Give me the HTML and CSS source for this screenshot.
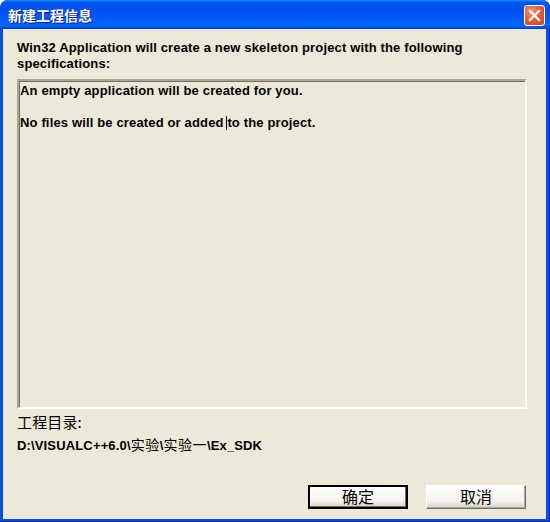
FILE: index.html
```html
<!DOCTYPE html>
<html>
<head>
<meta charset="utf-8">
<link rel="stylesheet" href="styles.css">
</head>
<body>
<div class="window">
  <div class="titlebar">
    <span class="title">新建工程信息</span>
    <div class="close">
      <svg width="21" height="21" viewBox="0 0 21 21"><path d="M6 6 L15 15 M15 6 L6 15" stroke="#fff" stroke-width="2.2" stroke-linecap="square"/></svg>
    </div>
  </div>
  <div class="client">
    <p class="intro">Win32 Application will create a new skeleton project with the following specifications:</p>
    <div class="box">
      <p class="line">An empty application will be created for you.</p>
      <p class="line">&nbsp;</p>
      <p class="line">No files will be created or added <span class="caret"></span>to the project.</p>
    </div>
    <p class="label">工程目录:</p>
    <p class="path">D:\VISUALC++6.0\<span class="cjk">实验</span>\<span class="cjk">实验一</span>\Ex_SDK</p>
    <div class="buttons">
      <button class="btn default">确定</button>
      <button class="btn">取消</button>
    </div>
  </div>
</div>
</body>
</html>
```
FILE: styles.css
```css
* { box-sizing: border-box; }
html, body { margin: 0; padding: 0; background: #fff; }
.window {
  width: 550px; height: 522px;
  background: #0a4ee4;
  border-radius: 8px 8px 0 0;
  display: flex; flex-direction: column;
  overflow: hidden;
  box-shadow: inset 0 -1px 0 #001ea0, inset -1px 0 0 #001ea0;
}
.titlebar {
  height: 29px; flex: none;
  display: flex; align-items: center; justify-content: space-between;
  padding: 0 5px 0 8px;
  background: linear-gradient(180deg, #0997ff 0%, #0053ee 8%, #0050ee 40%, #0066ff 88%, #0053e8 94%, #003dd7 100%);
  border-radius: 8px 8px 0 0;
}
.title {
  color: #fff; font: bold 14px "Noto Sans CJK SC", sans-serif;
  text-shadow: 1px 1px 0 #0a1883;
  margin-top: 1px;
}
.close {
  width: 21px; height: 21px; margin-top: 1px;
  border: 1px solid #fff; border-radius: 3px;
  background: radial-gradient(circle at 35% 30%, #f09a7c 0%, #e0603a 45%, #c94520 100%);
  display: flex; align-items: center; justify-content: center;
}
.close svg { display: block; margin: -1px; }
.client {
  flex: 1;
  margin: 0 4px 3px 3px;
  background: #ece9d8;
  padding: 11px 19px 0 14px;
  font: bold 13px "Liberation Sans", Arial, sans-serif;
  letter-spacing: 0.15px;
  color: #000;
  display: flex; flex-direction: column;
}
p { margin: 0; }
.intro { line-height: 16px; }
.box {
  margin-top: 7px;
  height: 330px;
  border-style: solid; border-width: 2px;
  border-color: #aca899 #fff #fff #aca899;
  box-shadow: inset 1px 1px 0 #716f64;
  padding: 2px 1px;
  background: #ece9d8;
}
.line { line-height: 16px; white-space: nowrap; }
.caret { display: inline-block; width: 1px; height: 14px; background: #000; vertical-align: -3px; margin-left: -1px; }
.label {
  margin-top: 5px;
  font: 15px "Noto Sans CJK SC", sans-serif;
  line-height: 16px;
}
.path {
  margin-top: 4px; line-height: 16px;
}
.cjk { font: 14px "Noto Sans CJK SC", sans-serif; letter-spacing: 0.5px; }
.buttons {
  margin-top: 31px;
  display: flex; justify-content: flex-end; gap: 18px;
  padding-right: 1px;
}
.btn {
  width: 100px; height: 24px;
  font: 16px/18px "Noto Sans CJK SC", sans-serif;
  background: linear-gradient(180deg, #fff 0%, #f4f3ee 70%, #d6d0c5 100%);
  border: 1px solid #888;
  border-color: #fff #716f64 #716f64 #fff;
  box-shadow: inset -1px -1px 0 #aca899;
  padding: 0 0 3px; color: #000;
}
.btn.default { border: 2px solid #000; box-shadow: inset -1px -1px 0 #716f64, inset 1px 1px 0 #fff; }
```
